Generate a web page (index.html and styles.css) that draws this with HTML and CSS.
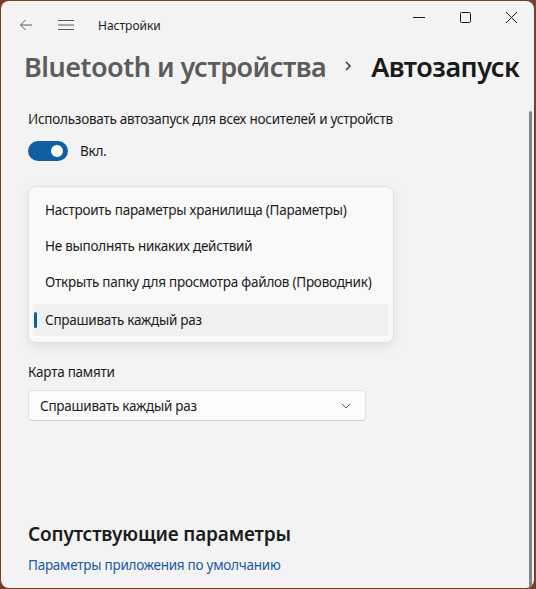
FILE: index.html
```html
<!DOCTYPE html>
<html lang="ru">
<head>
    <meta charset="UTF-8">
    <meta name="viewport" content="width=device-width, initial-scale=1.0">
    <title>Настройки</title>
    <link rel="stylesheet" href="styles.css">
</head>
<body>
    <div class="window">
        <div class="titlebar">
            <span class="tb-btn back">
                <svg width="14" height="14" viewBox="0 0 14 14"><path d="M13 7H1.5M6.5 2L1.5 7l5 5" fill="none" stroke="#5a5a5a" stroke-width="1"/></svg>
            </span>
            <span class="tb-btn menu">
                <svg width="16" height="12" viewBox="0 0 16 12"><path d="M0 1.5h16M0 6h16M0 10.5h16" fill="none" stroke="#5a5a5a" stroke-width="1"/></svg>
            </span>
            <span class="app-title">Настройки</span>
            <div class="controls">
                <span class="ctl"><svg width="12" height="12" viewBox="0 0 12 12"><path d="M0 6.5h12" stroke="#1a1a1a" stroke-width="1"/></svg></span>
                <span class="ctl"><svg width="12" height="12" viewBox="0 0 12 12"><rect x="1.5" y="1.5" width="10" height="10" rx="1" fill="none" stroke="#1a1a1a" stroke-width="1"/></svg></span>
                <span class="ctl"><svg width="12" height="12" viewBox="0 0 12 12"><path d="M1 1l11 11M12 1L1 12" stroke="#1a1a1a" stroke-width="1"/></svg></span>
            </div>
        </div>

        <h1 class="crumbs">
            <span class="crumb-parent">Bluetooth и устройства</span>
            <svg class="crumb-sep" width="8" height="10" viewBox="0 0 8 10"><path d="M2 1l4 4-4 4" fill="none" stroke="#3a3a3a" stroke-width="1.5"/></svg>
            <span class="crumb-current">Автозапуск</span>
        </h1>

        <div class="content">
            <p class="setting-label">Использовать автозапуск для всех носителей и устройств</p>
            <div class="toggle-row">
                <span class="toggle"><span class="knob"></span></span>
                <span>Вкл.</span>
            </div>

            <h2 class="section-title">Выбор значений</h2>
            <p class="field-label">Съемный носитель</p>
            <div class="combo"></div>

            <p class="field-label">Карта памяти</p>
            <div class="combo">
                <span>Спрашивать каждый раз</span>
                <svg width="10" height="6" viewBox="0 0 10 6"><path d="M1 1l4 4 4-4" fill="none" stroke="#5a5a5a" stroke-width="1"/></svg>
            </div>

            <h2 class="related-title">Сопутствующие параметры</h2>
            <a class="link" href="#">Параметры приложения по умолчанию</a>
        </div>

        <ul class="dropdown">
            <li>Настроить параметры хранилища (Параметры)</li>
            <li>Не выполнять никаких действий</li>
            <li>Открыть папку для просмотра файлов (Проводник)</li>
            <li class="selected">Спрашивать каждый раз</li>
        </ul>

        <div class="scrollbar"></div>
    </div>
</body>
</html>
```

FILE: styles.css
```css
* {
    box-sizing: border-box;
}
html, body {
    margin: 0;
    padding: 0;
}
body {
    background: #7a3f2c;
    font-family: "Noto Sans", "Segoe UI", sans-serif;
    font-size: 13.5px;
    letter-spacing: -0.25px;
    color: #1b1b1b;
    width: 536px;
    height: 589px;
    overflow: hidden;
}
.window {
    position: relative;
    margin: 1px 2px 1px 1px;
    height: 587px;
    background: #f3f3f3;
    border-radius: 8px;
    overflow: hidden;
}
.titlebar {
    display: flex;
    align-items: center;
    height: 48px;
}
.tb-btn {
    display: flex;
    align-items: center;
    justify-content: center;
}
.back {
    margin-left: 18px;
    width: 14px;
}
.menu {
    margin-left: 25px;
    width: 16px;
}
.app-title {
    margin-left: 24px;
    font-size: 12px;
    letter-spacing: 0;
    color: #1b1b1b;
}
.controls {
    display: flex;
    margin-left: auto;
    align-self: flex-start;
    margin-top: 10px;
}
.ctl {
    width: 46px;
    display: flex;
    justify-content: center;
}
.crumbs {
    display: flex;
    align-items: center;
    margin: 0;
    padding: 0 0 0 23px;
    height: 34px;
    font-size: 27px;
    letter-spacing: -0.5px;
    font-weight: 600;
    white-space: nowrap;
}
.crumb-parent {
    color: #5c5c5c;
}
.crumb-sep {
    margin: 0 19px 0 18px;
}
.crumb-current {
    color: #1a1a1a;
}
.content {
    padding: 26px 0 0 27px;
}
.setting-label {
    margin: 0;
    line-height: 20px;
}
.toggle-row {
    display: flex;
    align-items: center;
    gap: 12px;
    margin-top: 12px;
}
.toggle {
    width: 40px;
    height: 20px;
    border-radius: 10px;
    background: #115ea3;
    display: flex;
    align-items: center;
    justify-content: flex-end;
}
.knob {
    width: 12px;
    height: 12px;
    border-radius: 50%;
    background: #ffffff;
    margin-right: 5px;
}
.section-title {
    margin: 39px 0 0 0;
    font-size: 20px;
    font-weight: 600;
    line-height: 28px;
}
.field-label {
    margin: 12px 0 0 0;
    line-height: 20px;
}
.combo {
    display: flex;
    align-items: center;
    justify-content: space-between;
    width: 338px;
    height: 31px;
    padding: 0 14px 0 11px;
    margin-top: 8px;
    background: #fbfbfb;
    border: 1px solid #e3e3e3;
    border-bottom-color: #d2d2d2;
    border-radius: 4px;
}
.field-label + .combo + .field-label {
    margin-top: 63px;
}
.related-title {
    margin: 99px 0 0 0;
    font-size: 19px;
    letter-spacing: -0.15px;
    font-weight: 600;
    line-height: 28px;
}
.link {
    display: block;
    margin-top: 7px;
    color: #1a5aa0;
    text-decoration: none;
    line-height: 20px;
}
.dropdown {
    position: absolute;
    left: 27px;
    top: 185px;
    width: 366px;
    margin: 0;
    padding: 5px 5px 6px;
    list-style: none;
    background: #f9f9f9;
    border: 1px solid #e2e2e2;
    border-radius: 8px;
    box-shadow: 0 4px 12px rgba(0, 0, 0, 0.08);
}
.dropdown li {
    position: relative;
    height: 36px;
    line-height: 36px;
    padding-left: 11px;
    border-radius: 4px;
}
.dropdown li.selected {
    background: #f0f0f0;
    height: 32px;
    line-height: 32px;
    margin-top: 4px;
}
.dropdown li.selected::before {
    content: "";
    position: absolute;
    left: 0;
    top: 8px;
    width: 3px;
    height: 16px;
    border-radius: 2px;
    background: #115ea3;
}
.scrollbar {
    position: absolute;
    right: 2px;
    top: 110px;
    bottom: 0;
    width: 3px;
    border-radius: 2px;
    background: #868686;
}
```
